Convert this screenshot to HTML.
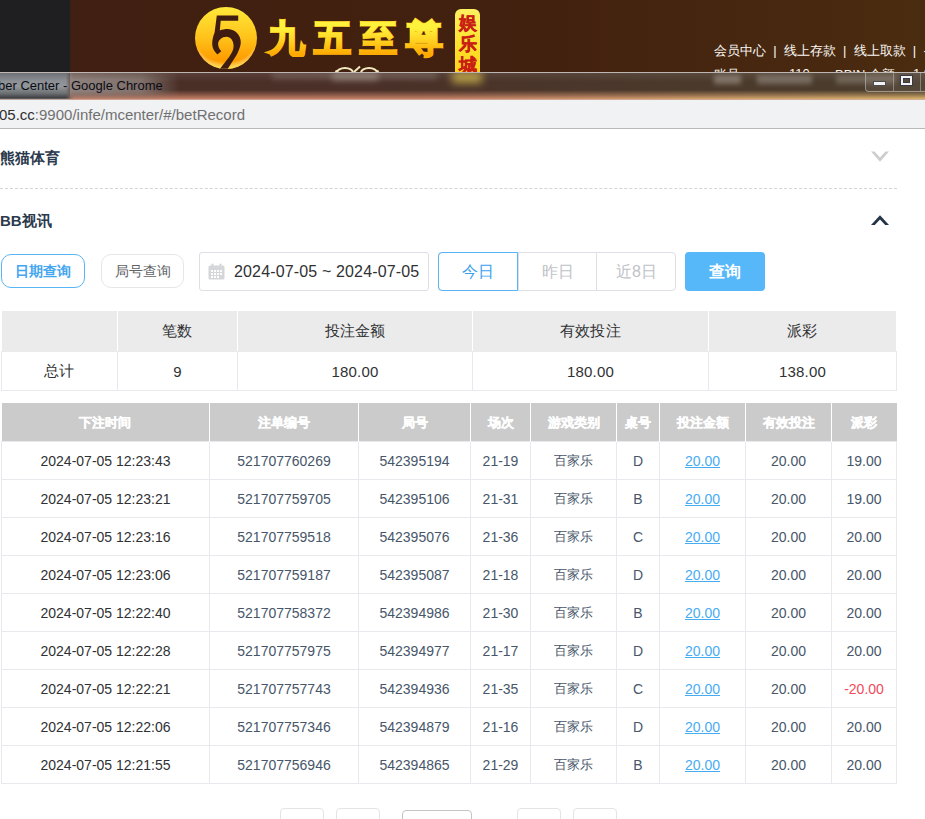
<!DOCTYPE html>
<html><head><meta charset="utf-8">
<style>
*{margin:0;padding:0;box-sizing:border-box}
html,body{width:925px;height:819px;overflow:hidden;background:#fff;font-family:"Liberation Sans",sans-serif;position:relative}
.abs{position:absolute}
.txt{white-space:nowrap}
#hdr{left:0;top:0;width:925px;height:72px;background:linear-gradient(90deg,#3f1f12 0%,#43210f 60%,#4a2c10 100%)}
#strip{left:0;top:0;width:70px;height:72px;background:#1f1f21}
#title{left:0;top:72px;width:925px;height:28px;background:linear-gradient(90deg,#4a2e26 0%,#4a3028 40%,#4b3a2c 75%,#4a3c2c 100%)}
#brand{font-size:37px;font-weight:bold;letter-spacing:9px;line-height:44px}
.bs{color:#f5ac10;-webkit-text-stroke:2.2px #f6b010}
.bf{background:linear-gradient(180deg,#fff23c 25%,#ffd020 55%,#ffa800 85%);-webkit-background-clip:text;background-clip:text;-webkit-text-fill-color:transparent;-webkit-text-stroke:1.4px transparent}
#badge{font-family:"Liberation Serif",serif;font-size:18px;line-height:21.3px;font-weight:bold;color:#c81e14;-webkit-text-stroke:0.4px #c81e14;text-align:center}
#addr{left:0;top:100px;width:925px;height:29px;background:#f1f2f4;border-bottom:1px solid #b9b9b9}
.sec{font-size:15px;font-weight:bold;color:#2b3a4c}
#dash{left:0;top:188px;width:897px;height:0;border-top:1px dashed #d4d4d4}
.btn{border-radius:10px;font-size:14px;text-align:center;line-height:32px;height:34px;top:254px}
#b1{left:1px;width:84px;border:1px solid #5ab5f7;color:#44a6ef;font-weight:bold}
#b2{left:101px;width:83px;border:1px solid #e6e6e6;color:#606266}
#date{left:199px;top:252px;width:230px;height:39px;border:1px solid #dcdfe6;border-radius:3px;font-size:16px;letter-spacing:0.15px;color:#303133;line-height:37px;padding-left:34px}
#grp{left:438px;top:252px;width:238px;height:39px;border:1px solid #dcdfe6;border-radius:4px}
#grp div{position:absolute;top:0;height:37px;line-height:37px;text-align:center;font-size:16px;color:#bfc2c8}
#q{left:685px;top:252px;width:80px;height:39px;background:#56b8f9;border-radius:4px;color:#fff;font-size:16px;font-weight:bold;text-align:center;line-height:39px}
table{border-collapse:collapse;position:absolute;table-layout:fixed}
#sum{left:1px;top:311px;width:895px}
#sum td{border:1px solid #e8e9ec;text-align:center;font-size:15px;letter-spacing:0.2px;color:#303133;height:39px;padding-top:2px}
#sum tr.h td{background:#ebebeb;border-top:0;border-color:#fff #fff #ebebeb #fff;height:40px}
#main{left:1px;top:403px;width:895px}
#main th{background:#cbcbcb;color:#fff;font-size:13px;font-weight:bold;-webkit-text-stroke:0.35px #fff;height:38px;padding-top:2px;border-left:1px solid #fff;text-align:center}
#main th:first-child{border-left:0}
#main td{border:1px solid #e8e9ec;height:38px;padding-top:2px;text-align:center;font-size:14px;color:#475669}
#main td.c1{color:#303133}
#main td.cj{font-size:13px}
.lk{color:#48acf2;text-decoration:underline}
.neg{color:#f24a5a !important}
.pg{top:808px;height:30px;border:1px solid #e4e4e4;border-radius:4px;background:#fff}
</style></head><body>
<div id="hdr" class="abs"></div>
<div id="strip" class="abs"></div>
<svg class="abs" style="left:190px;top:3px" width="72" height="70" viewBox="0 0 72 70">
 <defs>
  <linearGradient id="lg1" x1="0" y1="0" x2="0" y2="1"><stop offset="0" stop-color="#ffe83a"/><stop offset="0.5" stop-color="#ffc21a"/><stop offset="0.85" stop-color="#ff9c00"/><stop offset="1" stop-color="#ffb800"/></linearGradient>
  <radialGradient id="rg1" cx="0.5" cy="0.35" r="0.68"><stop offset="0.8" stop-color="#fff" stop-opacity="0"/><stop offset="1" stop-color="#fff050" stop-opacity="0.9"/></radialGradient>
 </defs>
 <circle cx="36" cy="35" r="31" fill="url(#lg1)"/>
 <circle cx="36" cy="35" r="31" fill="url(#rg1)"/>
 <path d="M26.8 12.6 H48.2 V17.8 H30.7 L29.8 27.5 C32 26.5 35 26 38 26 C45.5 26.5 51 32 50.8 39.8 C50.6 44 48.5 48 46.9 51.5 L37.8 65.8 H30 L39.1 54 C41.5 50.5 43.6 47 43.6 43 C43.6 37.5 40.5 33.7 36.5 33.7 C32 33.7 28.1 37 28.1 41.1 C28.1 43.5 29.2 46 31.3 48.2 L27.4 51.5 C24 48.5 22.2 45 22.2 41.1 C22.2 36 23.5 32.5 24.6 29.5 Z" fill="#3e1d10"/>
</svg>
<div class="abs txt bs" id="brand" style="left:267.5px;top:17px">九五至尊</div>
<div class="abs txt bf" id="brand" style="left:267.5px;top:17px">九五至尊</div>
<div class="abs" style="left:455px;top:9px;width:25px;height:63px;border-radius:6px 6px 0 0;background:linear-gradient(180deg,#fff060,#ffe02a 60%,#ffd21a)"></div>
<div class="abs" id="badge" style="left:457px;top:12.5px;width:22px">娱<br>乐<br>城</div>
<div class="abs txt" style="left:714px;top:42px;font-size:13px;color:#fbf8f4">会员中心&nbsp;&nbsp;|&nbsp;&nbsp;线上存款&nbsp;&nbsp;|&nbsp;&nbsp;线上取款&nbsp;&nbsp;|&nbsp;&nbsp;-</div>
<div class="abs" style="left:0;top:0;width:925px;height:72px;overflow:hidden"><div class="abs txt" style="left:714px;top:66px;font-size:13px;color:#f8f4ee">账号&nbsp;:</div><div class="abs txt" style="left:789px;top:66px;font-size:13px;color:#f8f4ee">110</div><div class="abs txt" style="left:835px;top:66px;font-size:13px;color:#f8f4ee">BBIN&nbsp;余额&nbsp;:</div><div class="abs txt" style="left:913px;top:66px;font-size:13px;color:#f8f4ee">1.00</div>
<svg class="abs" style="left:332px;top:64px" width="50" height="8" viewBox="0 0 50 8"><g fill="none" stroke="#f2e8c0" stroke-width="2"><ellipse cx="13" cy="9" rx="8" ry="5"/><ellipse cx="37" cy="9" rx="8" ry="5"/><path d="M22 8 L28 2.5"/><path d="M3.5 8 L5 6.5"/><path d="M46.5 8 L45 6.5"/></g></svg></div>
<div class="abs" id="title"></div>
<div class="abs" style="left:0;top:73px;width:925px;height:9px;background:linear-gradient(180deg,rgba(255,255,255,0.08),rgba(255,255,255,0))"></div>
<div class="abs" style="left:0;top:90px;width:925px;height:10px;background:linear-gradient(90deg,rgba(205,130,105,1) 0%,rgba(200,130,105,1) 45%,rgba(215,165,110,1) 80%,rgba(220,180,110,1) 100%);-webkit-mask-image:linear-gradient(180deg,transparent 0%,rgba(0,0,0,0.5) 50%,#000 90%,rgba(0,0,0,0.6) 100%)"></div>
<div class="abs" style="left:0;top:73px;width:74px;height:27px;background:linear-gradient(180deg,#6e7276 0%,#8c8f93 30%,#94979a 50%,#6e7174 75%,#3e4044 92%,#9a9a9a 100%);-webkit-mask-image:linear-gradient(90deg,#000 0%,#000 89%,transparent 100%)"></div>
<div class="abs" style="left:70px;top:73px;width:110px;height:26px;background:linear-gradient(90deg,rgba(150,138,134,0.9) 0%,rgba(145,133,128,0.75) 65%,rgba(140,125,120,0) 100%);-webkit-mask-image:linear-gradient(180deg,rgba(0,0,0,0.6) 0%,#000 25%,#000 70%,rgba(0,0,0,0.2) 100%)"></div>
<div class="abs" style="left:0;top:72px;width:925px;height:27px;overflow:hidden">
<div class="abs" style="left:714px;top:3px;width:27px;height:9px;background:rgba(235,230,225,0.32);filter:blur(2.5px)"></div>
<div class="abs" style="left:757px;top:3px;width:55px;height:9px;background:rgba(235,230,225,0.28);filter:blur(2.5px)"></div>
<div class="abs" style="left:836px;top:3px;width:60px;height:9px;background:rgba(235,230,225,0.22);filter:blur(2.5px)"></div>
<div class="abs" style="left:332px;top:0px;width:46px;height:9px;background:rgba(225,220,205,0.3);filter:blur(3px)"></div>
<div class="abs" style="left:272px;top:0px;width:165px;height:7px;background:rgba(225,220,215,0.2);filter:blur(3px)"></div>
<div class="abs" style="left:452px;top:0px;width:30px;height:11px;background:rgba(255,230,90,0.6);filter:blur(4px)"></div>
</div>
<div class="abs" style="left:0;top:72px;width:925px;height:1px;background:#bdb6b2"></div>
<div class="abs" style="left:0;top:99px;width:925px;height:1px;background:#d8b8a8;opacity:0.7"></div>
<div class="abs txt" style="left:-2px;top:78px;font-size:13px;color:#0a0c16">ber Center - Google Chrome</div>
<div class="abs" style="left:865px;top:72px;width:70px;height:20px;border:1px solid rgba(200,200,200,0.55);border-top:0;border-radius:0 0 0 4px;background:rgba(255,255,255,0.06)"></div>
<div class="abs" style="left:893px;top:72px;width:1px;height:19px;background:rgba(200,200,200,0.45)"></div>
<div class="abs" style="left:920px;top:72px;width:1px;height:19px;background:rgba(200,200,200,0.45)"></div>
<div class="abs" style="left:874px;top:81.5px;width:11px;height:3.5px;background:#f2f2f2;box-shadow:0 0 0 1px #4a4a54"></div>
<div class="abs" style="left:901px;top:76px;width:11px;height:9px;border:2px solid #f2f2f2;box-shadow:0 0 0 1px #3a3a44, inset 0 0 0 1px #3a3a44"></div>
<div id="addr" class="abs"></div>
<div class="abs txt" style="left:-1px;top:106px;font-size:15px;color:#707070"><span style="color:#303030">05.cc</span>:9900/infe/mcenter/#/betRecord</div>

<div class="abs txt sec" style="left:0;top:149px">熊猫体育</div>
<svg class="abs" style="left:870px;top:150px" width="20" height="14" viewBox="0 0 20 14"><polygon points="1,1.6 4.6,1.6 10,7.6 15.4,1.6 19,1.6 10,11.8" fill="#cdcdcd"/></svg>
<div id="dash" class="abs"></div>
<div class="abs txt sec" style="left:0;top:212px">BB视讯</div>
<svg class="abs" style="left:870px;top:214px" width="20" height="13" viewBox="0 0 20 13"><polygon points="1,11 10,1.2 19,11 15.2,11 10,5.4 4.8,11" fill="#253548"/></svg>

<div id="b1" class="abs btn txt">日期查询</div>
<div id="b2" class="abs btn txt">局号查询</div>
<div id="date" class="abs txt">2024-07-05 ~ 2024-07-05</div>
<svg class="abs" style="left:208px;top:263px" width="17" height="17" viewBox="0 0 17 17"><rect x="0.5" y="2.5" width="16" height="14" rx="1.5" fill="#d4d6da"/><rect x="3.5" y="0.5" width="2" height="4" rx="0.8" fill="#d4d6da"/><rect x="11.5" y="0.5" width="2" height="4" rx="0.8" fill="#d4d6da"/><g fill="#fff"><rect x="3" y="7" width="2" height="2"/><rect x="6" y="7" width="2" height="2"/><rect x="9" y="7" width="2" height="2"/><rect x="12" y="7" width="2" height="2"/><rect x="3" y="10" width="2" height="2"/><rect x="6" y="10" width="2" height="2"/><rect x="9" y="10" width="2" height="2"/><rect x="12" y="10" width="2" height="2"/><rect x="3" y="13" width="2" height="2"/><rect x="6" y="13" width="2" height="2"/><rect x="9" y="13" width="2" height="2"/></g></svg>
<div id="grp" class="abs">
 <div style="left:-1px;top:-1px;width:80px;height:39px;border:1px solid #5ab5f7;border-radius:4px 0 0 4px;color:#3aa2f0;line-height:37px">今日</div>
 <div style="left:79px;width:79px;border-left:1px solid #dcdfe6">昨日</div>
 <div style="left:157px;width:80px;border-left:1px solid #dcdfe6">近8日</div>
</div>
<div id="q" class="abs txt">查询</div>

<table id="sum">
<colgroup><col style="width:116px"><col style="width:120px"><col style="width:235px"><col style="width:236px"><col style="width:188px"></colgroup>
<tr class="h"><td></td><td>笔数</td><td>投注金额</td><td>有效投注</td><td>派彩</td></tr>
<tr><td>总计</td><td>9</td><td>180.00</td><td>180.00</td><td>138.00</td></tr>
</table>

<table id="main">
<colgroup><col style="width:208px"><col style="width:149px"><col style="width:112px"><col style="width:60px"><col style="width:86px"><col style="width:43px"><col style="width:86px"><col style="width:86px"><col style="width:65px"></colgroup>
<tr><th>下注时间</th><th>注单编号</th><th>局号</th><th>场次</th><th>游戏类别</th><th>桌号</th><th>投注金额</th><th>有效投注</th><th>派彩</th></tr>
<tr><td class="c1">2024-07-05 12:23:43</td><td>521707760269</td><td>542395194</td><td>21-19</td><td class="cj">百家乐</td><td>D</td><td><span class="lk">20.00</span></td><td>20.00</td><td>19.00</td></tr>
<tr><td class="c1">2024-07-05 12:23:21</td><td>521707759705</td><td>542395106</td><td>21-31</td><td class="cj">百家乐</td><td>B</td><td><span class="lk">20.00</span></td><td>20.00</td><td>19.00</td></tr>
<tr><td class="c1">2024-07-05 12:23:16</td><td>521707759518</td><td>542395076</td><td>21-36</td><td class="cj">百家乐</td><td>C</td><td><span class="lk">20.00</span></td><td>20.00</td><td>20.00</td></tr>
<tr><td class="c1">2024-07-05 12:23:06</td><td>521707759187</td><td>542395087</td><td>21-18</td><td class="cj">百家乐</td><td>D</td><td><span class="lk">20.00</span></td><td>20.00</td><td>20.00</td></tr>
<tr><td class="c1">2024-07-05 12:22:40</td><td>521707758372</td><td>542394986</td><td>21-30</td><td class="cj">百家乐</td><td>B</td><td><span class="lk">20.00</span></td><td>20.00</td><td>20.00</td></tr>
<tr><td class="c1">2024-07-05 12:22:28</td><td>521707757975</td><td>542394977</td><td>21-17</td><td class="cj">百家乐</td><td>D</td><td><span class="lk">20.00</span></td><td>20.00</td><td>20.00</td></tr>
<tr><td class="c1">2024-07-05 12:22:21</td><td>521707757743</td><td>542394936</td><td>21-35</td><td class="cj">百家乐</td><td>C</td><td><span class="lk">20.00</span></td><td>20.00</td><td class="neg">-20.00</td></tr>
<tr><td class="c1">2024-07-05 12:22:06</td><td>521707757346</td><td>542394879</td><td>21-16</td><td class="cj">百家乐</td><td>D</td><td><span class="lk">20.00</span></td><td>20.00</td><td>20.00</td></tr>
<tr><td class="c1">2024-07-05 12:21:55</td><td>521707756946</td><td>542394865</td><td>21-29</td><td class="cj">百家乐</td><td>B</td><td><span class="lk">20.00</span></td><td>20.00</td><td>20.00</td></tr>
</table>

<div class="abs pg" style="left:280px;width:44px"></div>
<div class="abs pg" style="left:336px;width:44px"></div>
<div class="abs pg" style="left:402px;top:810px;width:70px;border-color:#c4c4c4"></div>
<div class="abs pg" style="left:517px;width:44px"></div>
<div class="abs pg" style="left:573px;width:44px"></div>
</body></html>
